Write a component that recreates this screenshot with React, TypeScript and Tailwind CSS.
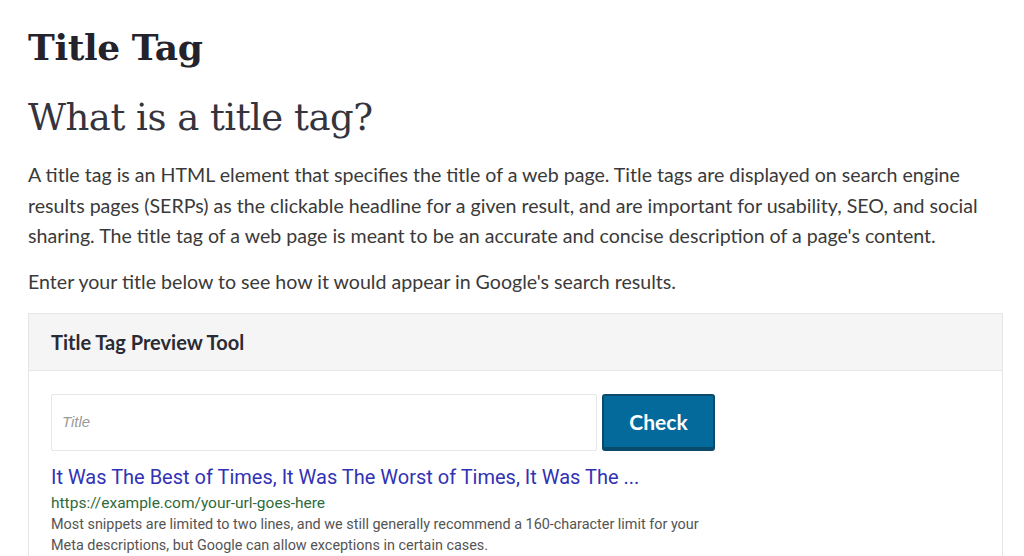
export default function App() {
  return (
    <div className="w-[1024px] h-[556px] overflow-hidden bg-white pl-[28px] pr-[22px]">
      <h1 className="font-['DejaVu_Serif',serif] font-bold text-[36px] leading-[44px] text-[#24232c] pt-[25px] tracking-[-0.4px]">
        Title Tag
      </h1>
      <h2 className="font-['DejaVu_Serif',serif] font-light text-[37px] leading-[44px] text-[#35343d] mt-[27px] tracking-[-0.5px]">
        What is a title tag?
      </h2>
      <p className="font-['Lato',sans-serif] text-[19.6px] leading-[30.5px] text-[#3a3a3a] mt-[20px] whitespace-nowrap">
        A title tag is an HTML element that specifies the title of a web page. Title tags are displayed on search engine
        <br />
        results pages (SERPs) as the clickable headline for a given result, and are important for usability, SEO, and social
        <br />
        sharing. The title tag of a web page is meant to be an accurate and concise description of a page's content.
      </p>
      <p className="font-['Lato',sans-serif] text-[19.6px] leading-[30.5px] text-[#3a3a3a] mt-[15px] whitespace-nowrap">
        Enter your title below to see how it would appear in Google's search results.
      </p>
      <div className="mt-[16px] w-[975px] border border-[#e6e6e6]">
        <div className="h-[57px] bg-[#f5f5f5] border-b border-[#e6e6e6] flex items-center px-[22px]">
          <span className="font-['Lato',sans-serif] font-bold text-[20px] text-[#2b2b33]">Title Tag Preview Tool</span>
        </div>
        <div className="px-[22px] pt-[23px]">
          <div className="flex gap-[5px]">
            <div className="w-[546px] h-[57px] border border-[#e3e8e8] rounded-[2px] flex items-center px-[10px]">
              <span className="font-['Liberation_Sans',sans-serif] italic text-[15px] text-[#9a9a9a]">Title</span>
            </div>
            <button className="w-[113px] h-[57px] bg-[#046a9c] border-2 border-[#0a4a6a] border-b-[4px] rounded-[3px] flex items-center justify-center font-['Lato',sans-serif] font-bold text-[21px] text-white">
              Check
            </button>
          </div>
          <div className="mt-[13px] font-['Roboto',sans-serif] whitespace-nowrap">
            <div className="text-[20px] leading-[26px] text-[#3232b4]">
              It Was The Best of Times, It Was The Worst of Times, It Was The ...
            </div>
            <div className="text-[15.5px] leading-[22px] text-[#2e6b3c] mt-[2px]">
              https://example.com/your-url-goes-here
            </div>
            <div className="text-[14.4px] leading-[20.5px] text-[#545454] mt-[1px]">
              Most snippets are limited to two lines, and we still generally recommend a 160-character limit for your
              <br />
              Meta descriptions, but Google can allow exceptions in certain cases.
            </div>
          </div>
        </div>
      </div>
    </div>
  );
}
